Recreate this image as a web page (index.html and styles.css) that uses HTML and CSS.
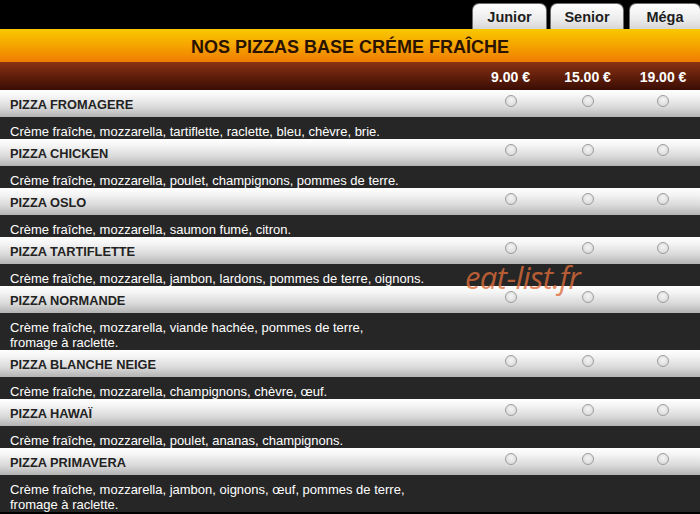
FILE: index.html
```html
<!DOCTYPE html>
<html lang="fr">
<head>
<meta charset="utf-8">
<title>Nos pizzas base crème fraîche</title>
<link rel="stylesheet" href="styles.css">
</head>
<body>
<div class="menu">
  <nav class="tabs">
    <span class="tab">Junior</span>
    <span class="tab tab-senior">Senior</span>
    <span class="tab tab-mega">Méga</span>
  </nav>
  <h1 class="category">NOS PIZZAS BASE CRÉME FRAÎCHE</h1>
  <div class="prices">
    <span class="spacer"></span>
    <span class="price">9.00 €</span>
    <span class="price">15.00 €</span>
    <span class="price">19.00 €</span>
  </div>

  <div class="item">
    <div class="item-head">
      <span class="name">PIZZA FROMAGERE</span>
      <span class="pick"><input type="radio" name="p1"></span>
      <span class="pick"><input type="radio" name="p1"></span>
      <span class="pick"><input type="radio" name="p1"></span>
    </div>
    <p class="desc">Crème fraîche, mozzarella, tartiflette, raclette, bleu, chèvre, brie.</p>
  </div>

  <div class="item">
    <div class="item-head">
      <span class="name">PIZZA CHICKEN</span>
      <span class="pick"><input type="radio" name="p2"></span>
      <span class="pick"><input type="radio" name="p2"></span>
      <span class="pick"><input type="radio" name="p2"></span>
    </div>
    <p class="desc">Crème fraîche, mozzarella, poulet, champignons, pommes de terre.</p>
  </div>

  <div class="item">
    <div class="item-head">
      <span class="name">PIZZA OSLO</span>
      <span class="pick"><input type="radio" name="p3"></span>
      <span class="pick"><input type="radio" name="p3"></span>
      <span class="pick"><input type="radio" name="p3"></span>
    </div>
    <p class="desc">Crème fraîche, mozzarella, saumon fumé, citron.</p>
  </div>

  <div class="item">
    <div class="item-head">
      <span class="name">PIZZA TARTIFLETTE</span>
      <span class="pick"><input type="radio" name="p4"></span>
      <span class="pick"><input type="radio" name="p4"></span>
      <span class="pick"><input type="radio" name="p4"></span>
    </div>
    <p class="desc">Crème fraîche, mozzarella, jambon, lardons, pommes de terre, oignons.</p>
  </div>

  <div class="item">
    <div class="item-head">
      <span class="name">PIZZA NORMANDE</span>
      <span class="pick"><input type="radio" name="p5"></span>
      <span class="pick"><input type="radio" name="p5"></span>
      <span class="pick"><input type="radio" name="p5"></span>
    </div>
    <p class="desc">Crème fraîche, mozzarella, viande hachée, pommes de terre,<br>fromage à raclette.</p>
  </div>

  <div class="item">
    <div class="item-head">
      <span class="name">PIZZA BLANCHE NEIGE</span>
      <span class="pick"><input type="radio" name="p6"></span>
      <span class="pick"><input type="radio" name="p6"></span>
      <span class="pick"><input type="radio" name="p6"></span>
    </div>
    <p class="desc">Crème fraîche, mozzarella, champignons, chèvre, œuf.</p>
  </div>

  <div class="item">
    <div class="item-head">
      <span class="name">PIZZA HAWAÏ</span>
      <span class="pick"><input type="radio" name="p7"></span>
      <span class="pick"><input type="radio" name="p7"></span>
      <span class="pick"><input type="radio" name="p7"></span>
    </div>
    <p class="desc">Crème fraîche, mozzarella, poulet, ananas, champignons.</p>
  </div>

  <div class="item">
    <div class="item-head">
      <span class="name">PIZZA PRIMAVERA</span>
      <span class="pick"><input type="radio" name="p8"></span>
      <span class="pick"><input type="radio" name="p8"></span>
      <span class="pick"><input type="radio" name="p8"></span>
    </div>
    <p class="desc">Crème fraîche, mozzarella, jambon, oignons, œuf, pommes de terre,<br>fromage à raclette.</p>
  </div>

  <div class="watermark">eat-list.fr</div>
</div>
</body>
</html>
```

FILE: styles.css
```css
html, body {
  margin: 0;
  padding: 0;
  background: #000;
}

body {
  font-family: "Liberation Sans", Arial, sans-serif;
  overflow: hidden;
}

.menu {
  position: relative;
  width: 700px;
}

/* size tabs */
.tabs {
  display: flex;
  justify-content: flex-end;
  align-items: flex-end;
  height: 29px;
}

.tab {
  box-sizing: border-box;
  height: 26px;
  width: 75px;
  margin-left: 3px;
  border: 1px solid #6a6a6a;
  border-bottom: none;
  border-radius: 7px 7px 0 0;
  background: linear-gradient(#ffffff, #ececec 60%, #d6d6d6);
  color: #1e1e1e;
  font-weight: bold;
  font-size: 14.5px;
  line-height: 26px;
  text-align: center;
}

.tab-senior {
  width: 74px;
}

.tab-mega {
  width: 72px;
  margin-left: 5px;
  margin-right: -1px;
}

/* category banner */
.category {
  margin: 0;
  height: 33px;
  background: linear-gradient(#f8c800, #f6a800 45%, #ef7c00);
  color: #2a1200;
  font-size: 18px;
  font-weight: bold;
  line-height: 37px;
  text-align: center;
}

.prices,
.item-head {
  display: grid;
  grid-template-columns: 1fr 77px 77px 74px;
  align-items: center;
}

.prices {
  height: 28px;
  background: linear-gradient(#8a3214, #5e1d0a 55%, #3a0d04);
  color: #fff;
  font-size: 14px;
  font-weight: bold;
}

.price {
  text-align: center;
  padding-top: 2px;
}

/* pizza rows */
.item-head {
  height: 27px;
  background: linear-gradient(#ffffff, #f4f4f4 25%, #d9d9d9 65%, #b3b3b3);
}

.name {
  padding-left: 10px;
  padding-top: 2px;
  color: #222;
  font-size: 12.8px;
  font-weight: bold;
}

.pick {
  display: flex;
  justify-content: center;
  padding-bottom: 5px;
}

.pick input {
  appearance: none;
  -webkit-appearance: none;
  box-sizing: border-box;
  width: 12px;
  height: 12px;
  margin: 0;
  border: 1px solid #9c9c9c;
  border-radius: 50%;
  background: radial-gradient(circle at 50% 40%, #f4f4f4, #d4d4d4);
}

.desc {
  margin: 0;
  box-sizing: border-box;
  padding: 7px 0 0 10px;
  background: #262626;
  color: #fff;
  font-size: 13px;
  line-height: 15px;
  overflow: hidden;
}

.item .desc {
  max-height: 37px;
}

.watermark {
  position: absolute;
  left: 465px;
  top: 256px;
  color: rgba(222, 108, 58, 0.8);
  font-family: "Open Sans", sans-serif;
  font-style: italic;
  font-size: 31px;
  letter-spacing: -0.6px;
  pointer-events: none;
}
```
